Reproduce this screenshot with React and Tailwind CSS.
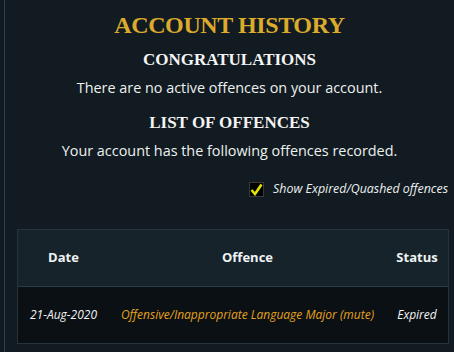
import React from 'react';

const rows = [
  { date: '21-Aug-2020', offence: 'Offensive/Inappropriate Language Major (mute)', status: 'Expired' },
];

const App = () => {
  return (
    <div className="w-[454px] h-[352px] overflow-hidden bg-[#111b21]">
      <div className="ml-[4px] h-full border-l border-[#2a4251] font-['Open_Sans','Noto_Sans',sans-serif] text-white">
        <div className="flex flex-col items-center pt-[10px]">
          <h1 className="font-['Liberation_Serif',serif] font-bold text-[24px] leading-[30px] text-[#dcaa2c] tracking-[-0.4px]">
            ACCOUNT HISTORY
          </h1>
          <h2 className="mt-[10px] font-['Liberation_Serif',serif] font-bold text-[17px] leading-[20px] text-[#f4f4f4]">
            CONGRATULATIONS
          </h2>
          <p className="mt-[9px] text-[14.4px] leading-[18px] text-[#eef0f0]">
            There are no active offences on your account.
          </p>
          <h2 className="mt-[16px] font-['Liberation_Serif',serif] font-bold text-[17px] leading-[20px] text-[#f4f4f4]">
            LIST OF OFFENCES
          </h2>
          <p className="mt-[9px] text-[14.4px] leading-[18px] text-[#eef0f0]">
            Your account has the following offences recorded.
          </p>
        </div>

        <div className="flex items-center justify-end pr-[6px] mt-[21px] h-[16px]">
          <span className="w-[15px] h-[15px] bg-black border border-[#3a3a3a] flex items-center justify-center">
            <svg width="13" height="13" viewBox="0 0 13 13">
              <path d="M1.5 7 L5 11 L11.5 1.5" fill="none" stroke="#e2e200" strokeWidth="2.6" strokeLinejoin="miter" />
            </svg>
          </span>
          <span className="ml-[9px] italic text-[12.4px] leading-[16px] text-[#eef0f0]">Show Expired/Quashed offences</span>
        </div>

        <div className="ml-[12px] mt-[32px] w-[432px] border border-[#26333c]">
          <div className="flex h-[57px] items-center bg-[#17232a] border-b border-[#2c3a44] font-bold text-[13px] text-[#eef2f4]">
            <div className="w-[91px] text-center">Date</div>
            <div className="w-[277px] text-center">Offence</div>
            <div className="flex-1 text-center">Status</div>
          </div>
          {rows.map((r) => (
            <div key={r.date} className="flex h-[56px] items-center bg-[#0a1014] italic text-[12px]">
              <div className="w-[91px] text-center text-[#f2f4f6]">{r.date}</div>
              <div className="w-[277px] text-center text-[#e5a21d]">{r.offence}</div>
              <div className="flex-1 text-center text-[#f2f4f6]">{r.status}</div>
            </div>
          ))}
        </div>
      </div>
    </div>
  );
};

export default App;
